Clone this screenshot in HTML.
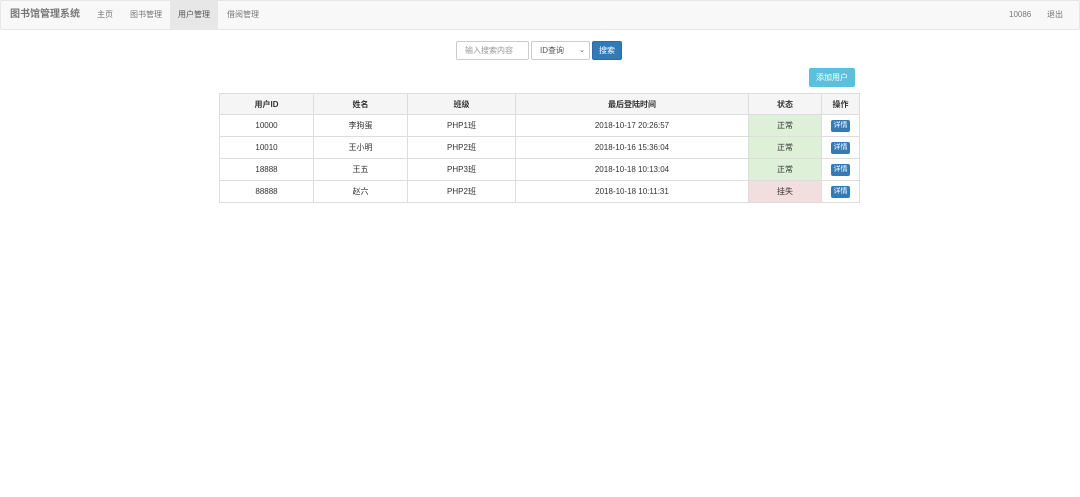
<!DOCTYPE html>
<html><head><meta charset="utf-8"><style>
*{box-sizing:border-box;margin:0;padding:0}
body{width:1080px;height:497px;background:#fff;font-family:"Liberation Sans","Noto Sans CJK SC",sans-serif;font-size:8px;color:#333;position:relative;overflow:hidden}
.nav{position:absolute;left:0;top:0;width:1080px;height:30px;background:#f8f8f8;border:1px solid #e7e7e7;border-radius:2px}
.nav span{position:absolute;top:0;line-height:28px;color:#777}
.brand{font-size:10px;font-weight:bold;color:#777;left:9px}
.act{background:#e7e7e7;color:#555!important;width:48px;text-align:center}
.abs{position:absolute}
.inp{left:456px;top:41px;width:73px;height:19px;border:1px solid #ccc;border-radius:2px;color:#999;padding-left:8px;line-height:17px}
.sel{left:531px;top:41px;width:59px;height:19px;border:1px solid #ccc;border-radius:2px;padding-left:8px;line-height:17px;color:#555}
.btn{left:592px;top:41px;width:30px;height:19px;background:#337ab7;border:1px solid #2e6da4;border-radius:2px;color:#fff;text-align:center;line-height:17px}
.add{left:809px;top:68px;width:46px;height:19px;background:#5bc0de;border-radius:2px;color:#fff;text-align:center;line-height:19px}
table{position:absolute;left:219px;top:93px;border-collapse:collapse;width:641px}
td,th{border:1px solid #ddd;text-align:center;height:22px;padding:0;font-weight:normal}
th{background:#f5f5f5;font-weight:bold;height:21px}
.ok{background:#dff0d8}.bad{background:#f2dede}
.d{display:inline-block;background:#337ab7;color:#fff;border-radius:2px;width:19px;height:12px;line-height:12px;font-size:7px}
</style></head><body>
<div class="nav">
<span class="brand">图书馆管理系统</span>
<span style="left:96px">主页</span>
<span style="left:129px">图书管理</span>
<span class="act" style="left:169px">用户管理</span>
<span style="left:226px">借阅管理</span>
<span style="left:1008px">10086</span>
<span style="left:1046px">退出</span>
</div>
<div class="abs inp">输入搜索内容</div>
<div class="abs sel">ID查询<span style="position:absolute;right:4px;top:0;font-size:7px">⌄</span></div>
<div class="abs btn">搜索</div>
<div class="abs add">添加用户</div>
<table>
<tr><th style="width:94px">用户ID</th><th style="width:94px">姓名</th><th style="width:108px">班级</th><th style="width:233px">最后登陆时间</th><th style="width:73px">状态</th><th>操作</th></tr>
<tr><td>10000</td><td>李狗蛋</td><td>PHP1班</td><td>2018-10-17 20:26:57</td><td class="ok">正常</td><td><span class="d">详情</span></td></tr>
<tr><td>10010</td><td>王小明</td><td>PHP2班</td><td>2018-10-16 15:36:04</td><td class="ok">正常</td><td><span class="d">详情</span></td></tr>
<tr><td>18888</td><td>王五</td><td>PHP3班</td><td>2018-10-18 10:13:04</td><td class="ok">正常</td><td><span class="d">详情</span></td></tr>
<tr><td>88888</td><td>赵六</td><td>PHP2班</td><td>2018-10-18 10:11:31</td><td class="bad">挂失</td><td><span class="d">详情</span></td></tr>
</table>
</body></html>
